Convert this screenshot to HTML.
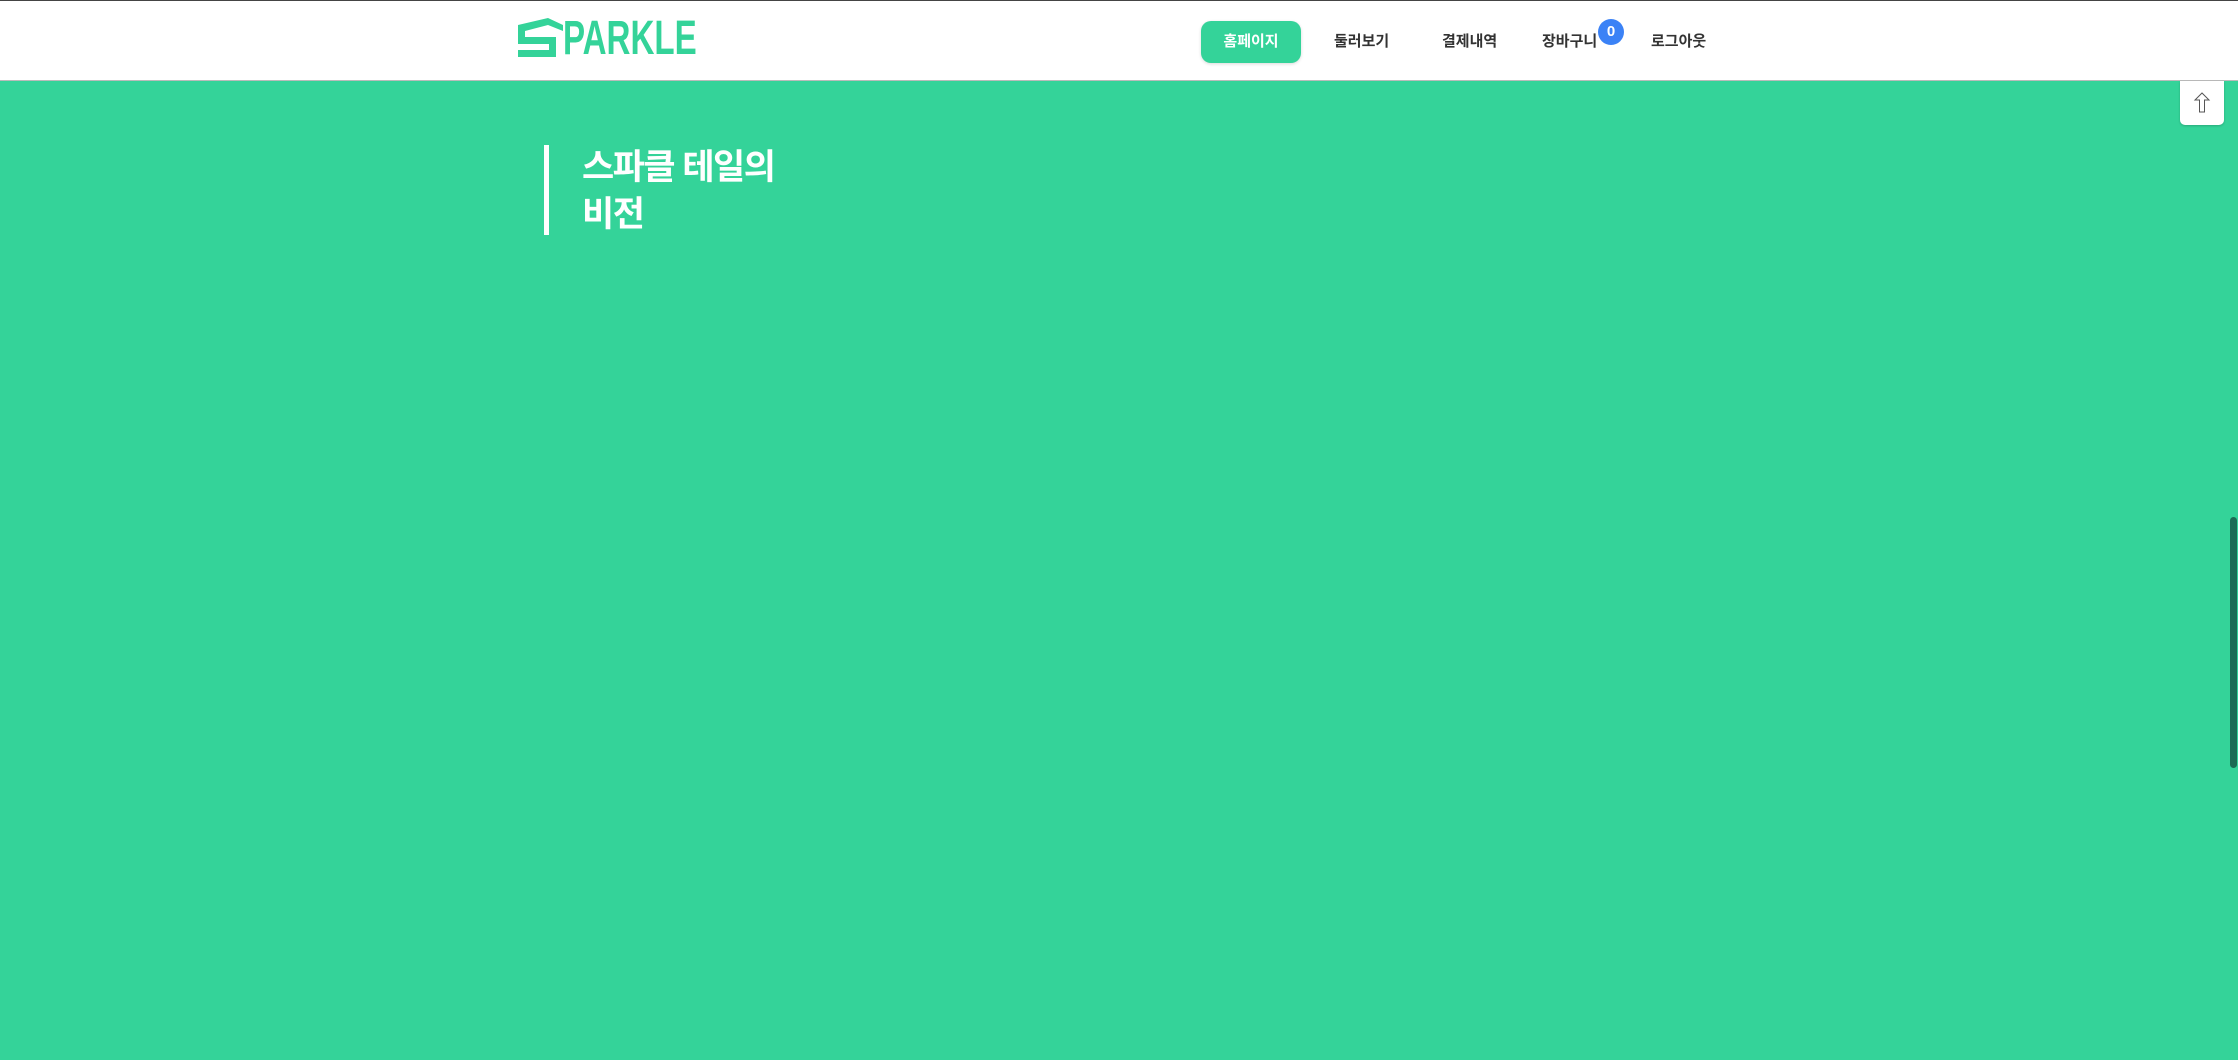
<!DOCTYPE html>
<html><head><meta charset="utf-8"><style>
html,body{margin:0;padding:0;width:2238px;height:1060px;overflow:hidden;background:#34d399;font-family:"Liberation Sans","Noto Sans CJK KR",sans-serif}
.hdr{position:absolute;left:0;top:0;width:2238px;height:81px;background:#fff;border-top:1px solid #444;box-sizing:border-box;border-bottom:1px solid #bbb}
.logo{position:absolute;left:518px;top:16px}
.pk{position:absolute;left:563px;top:14px;font-size:48px;font-weight:bold;color:#34d399;transform:scaleX(0.69);transform-origin:left top;line-height:48px}
.nav{position:absolute;top:0;font-size:15px;font-weight:bold;color:#333;line-height:81px}
.home{position:absolute;left:1201px;top:20px;width:100px;height:42px;background:#34d399;border-radius:10px;color:#fff;font-size:15px;font-weight:bold;text-align:center;line-height:42px;box-shadow:0 1px 3px rgba(0,0,0,.15)}
.badge{position:absolute;left:1598px;top:18px;width:26px;height:26px;border-radius:50%;background:#3b82f6;color:#fff;font-size:15px;font-weight:bold;text-align:center;line-height:26px}
.bar{position:absolute;left:544px;top:145px;width:5px;height:90px;background:#fff}
.title{position:absolute;left:582px;top:144px;color:#fff;font-size:35px;font-weight:bold;line-height:47px;letter-spacing:-1.5px}
.top{position:absolute;left:2180px;top:81px;width:44px;height:44px;background:#fff;border-radius:0 0 5px 5px;box-shadow:0 1px 2px rgba(0,0,0,.2)}
.sb{position:absolute;left:2230px;top:517px;width:7px;height:251px;background:#1c6b55;border-radius:4px}
</style></head><body>
<div class="hdr">
<svg class="logo" width="46" height="42" viewBox="0 0 46 42"><path d="M0 8 L30 1 L45 8 L45 14 L30 8 L7 14 L7 20 L38 20 L38 40 L0 40 L0 33 L31 33 L31 27 L0 27 Z" fill="#34d399"/></svg>
<div class="pk">PARKLE</div>
<div class="home">홈페이지</div>
<div class="nav" style="left:1334px">둘러보기</div>
<div class="nav" style="left:1442px">결제내역</div>
<div class="nav" style="left:1542px">장바구니</div>
<div class="badge">0</div>
<div class="nav" style="left:1651px">로그아웃</div>
</div>
<div class="bar"></div>
<div class="title">스파클 테일의<br>비전</div>
<div class="top"><svg width="44" height="44" viewBox="0 0 44 44"><path d="M22 12 L15 19 L19.5 19 L19.5 31 L24.5 31 L24.5 19 L29 19 Z" fill="none" stroke="#555" stroke-width="1"/></svg></div>
<div class="sb"></div>
</body></html>
